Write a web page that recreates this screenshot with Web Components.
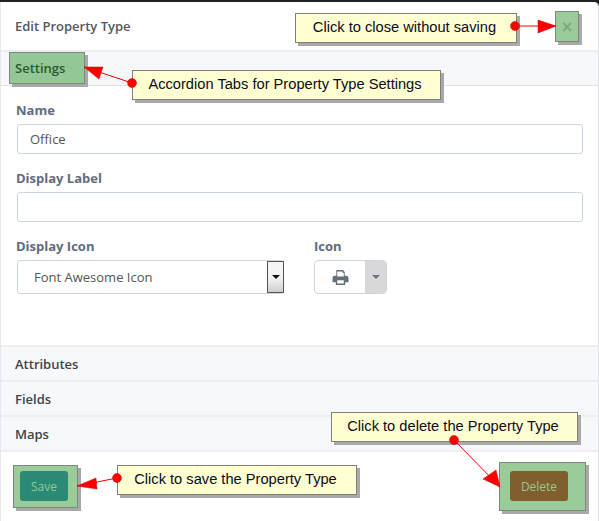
<!DOCTYPE html>
<html>
<head>
<meta charset="utf-8">
<title>Edit Property Type</title>
<style>
    html, body { margin: 0; padding: 0; background: #fff; }
    body { width: 599px; height: 521px; overflow: hidden; font-family: "Open Sans", sans-serif; }
</style>
</head>
<body>
<edit-dialog>
    <span slot="title">Edit Property Type</span>
    <mark-box slot="close" w="24" h="31"><span style="color:#7da87d;font:bold 15px 'DejaVu Sans',sans-serif">×</span></mark-box>

    <accordion-row open><mark-box w="76" h="32" flush><span style="font-weight:600;font-size:13px;color:#2a5a34;padding-left:5px">Settings</span></mark-box></accordion-row>
    <settings-form></settings-form>
    <accordion-row label="Attributes"></accordion-row>
    <accordion-row label="Fields"></accordion-row>
    <accordion-row label="Maps" last></accordion-row>

    <mark-box slot="save" w="65" h="43" inset="3"><dialog-button bg="#2b8a76">Save</dialog-button></mark-box>
    <mark-box slot="delete" w="87" h="49" inset="7"><dialog-button bg="#7f5f2e" wide>Delete</dialog-button></mark-box>
</edit-dialog>

<callout-note x="295" y="13" w="222">Click to close without saving</callout-note>
<callout-note x="132" y="70" w="309">Accordion Tabs for Property Type Settings</callout-note>
<callout-note x="117" y="465" w="240">Click to save the Property Type</callout-note>
<callout-note x="331" y="412" w="247">Click to delete the Property Type</callout-note>

<note-arrows></note-arrows>

<script>
class EditDialog extends HTMLElement {
    connectedCallback() {
        this.attachShadow({ mode: 'open' });
        this.shadowRoot.innerHTML = `
            <style>
                :host {
                    display: block;
                    width: 599px;
                    height: 521px;
                    box-sizing: border-box;
                    border-top: 2px solid #222;
                    background: #222;
                }
                .panel {
                    height: 519px;
                    box-sizing: border-box;
                    background: #fff;
                    border-left: 1px solid #e6e8ee;
                    border-right: 1px solid #dfe1e6;
                    border-radius: 0 5px 0 0;
                    display: flex;
                    flex-direction: column;
                }
                header {
                    height: 50px;
                    display: flex;
                    justify-content: space-between;
                    padding: 9px 19px 0 14px;
                    box-sizing: border-box;
                    border-bottom: 2px solid #eceef1;
                    flex: none;
                }
                .title {
                    font-size: 13px;
                    font-weight: 600;
                    color: #54575c;
                    line-height: 30px;
                }
                footer {
                    flex: 1;
                    display: flex;
                    justify-content: space-between;
                    padding: 13px 12px 0 12px;
                    align-items: flex-start;
                }
                ::slotted([slot="delete"]) { margin-top: -3px; }
            </style>
            <div class="panel">
                <header>
                    <div class="title"><slot name="title"></slot></div>
                    <slot name="close"></slot>
                </header>
                <slot></slot>
                <footer>
                    <slot name="save"></slot>
                    <slot name="delete"></slot>
                </footer>
            </div>
        `;
    }
}

class AccordionRow extends HTMLElement {
    connectedCallback() {
        const label = this.getAttribute('label') || '';
        this.attachShadow({ mode: 'open' });
        this.shadowRoot.innerHTML = `
            <style>
                :host {
                    display: block;
                    flex: none;
                    background: #f7f8fb;
                    border-top: 2px solid #eceef1;
                    height: 33px;
                    font-size: 13px;
                    font-weight: 600;
                    color: #3e444c;
                }
                :host([open]) {
                    border-top: 0;
                    height: 33px;
                    border-bottom: 1px solid #e0e2e6;
                    padding-left: 8px;
                }
                :host([last]) { border-bottom: 2px solid #eceef1; }
                .label { padding-left: 14px; line-height: 34px; }
            </style>
            ${label ? `<div class="label">${label}</div>` : '<slot></slot>'}
        `;
    }
}

class MarkBox extends HTMLElement {
    connectedCallback() {
        const w = this.getAttribute('w');
        const h = this.getAttribute('h');
        const inset = this.getAttribute('inset') || 0;
        this.attachShadow({ mode: 'open' });
        this.shadowRoot.innerHTML = `
            <style>
                :host {
                    display: flex;
                    align-items: center;
                    justify-content: center;
                    box-sizing: border-box;
                    width: ${w}px;
                    height: ${h}px;
                    padding-right: ${inset}px;
                    padding-bottom: ${inset ? 1 : 0}px;
                    background: #9bcb98;
                    border: 1px solid #808680;
                    box-shadow: 3px 3px 0 #a9a9a9;
                    flex: none;
                }
                :host([flush]) { justify-content: flex-start; background: #93c795; }
            </style>
            <slot></slot>
        `;
    }
}

class DialogButton extends HTMLElement {
    connectedCallback() {
        const bg = this.getAttribute('bg');
        this.attachShadow({ mode: 'open' });
        this.shadowRoot.innerHTML = `
            <style>
                :host {
                    display: flex;
                    align-items: center;
                    justify-content: center;
                    width: 48px;
                    height: 30px;
                    border-radius: 3px;
                    background: ${bg};
                    color: #93c795;
                    font-size: 12px;
                }
                :host([wide]) { width: 58px; }
            </style>
            <slot></slot>
        `;
    }
}

class SettingsForm extends HTMLElement {
    connectedCallback() {
        this.attachShadow({ mode: 'open' });
        this.shadowRoot.innerHTML = `
            <style>
                :host {
                    display: block;
                    flex: none;
                    height: 259px;
                    box-sizing: border-box;
                    padding: 15px 15px 0 15px;
                }
                label {
                    display: block;
                    font-size: 13px;
                    font-weight: 700;
                    color: #626c7c;
                    line-height: 18px;
                    margin: 0 0 5px -1px;
                }
                .field { margin-left: 1px; }
                .input {
                    box-sizing: border-box;
                    height: 30px;
                    border: 1px solid #ccd6e0;
                    border-radius: 3px;
                    font-size: 13px;
                    color: #555;
                    padding-left: 12px;
                    line-height: 28px;
                    margin-bottom: 15px;
                    background: #fff;
                }
                .row { display: flex; margin-top: 0; }
                .row .col-a { width: 297px; }
                .select {
                    box-sizing: border-box;
                    width: 267px;
                    height: 34px;
                    border: 1px solid #ccd6e0;
                    border-radius: 3px;
                    font-size: 13px;
                    color: #555;
                    padding-left: 16px;
                    line-height: 32px;
                    display: flex;
                    justify-content: space-between;
                    background: #fff;
                }
                .spin {
                    width: 17px;
                    height: 32px;
                    margin-right: -1px;
                    box-sizing: border-box;
                    border: 1px solid #555;
                    background: linear-gradient(#f4f4f4 50%, #cfcfcf);
                    display: flex;
                    align-items: center;
                    justify-content: center;
                }
                .spin i {
                    width: 0;
                    height: 0;
                    border: 4px solid transparent;
                    border-top: 4px solid #111;
                    border-bottom: 0;
                }
                .icon-btn {
                    box-sizing: border-box;
                    width: 73px;
                    height: 34px;
                    border: 1px solid #ccd6e0;
                    border-radius: 4px;
                    display: flex;
                    overflow: hidden;
                    background: #fff;
                }
                .icon-btn .face {
                    flex: 1;
                    display: flex;
                    align-items: center;
                    justify-content: center;
                }
                .icon-btn .caret {
                    width: 21px;
                    background: #d8d8d8;
                    display: flex;
                    align-items: center;
                    justify-content: center;
                }
                .caret i {
                    width: 0;
                    height: 0;
                    border: 4px solid transparent;
                    border-top: 4px solid #6f7680;
                    border-bottom: 0;
                }
            </style>
            <div class="field">
                <label>Name</label>
                <div class="input">Office</div>
            </div>
            <div class="field">
                <label>Display Label</label>
                <div class="input"></div>
            </div>
            <div class="row field" style="margin-top:15px">
                <div class="col-a">
                    <label>Display Icon</label>
                    <div class="select">Font Awesome Icon<span class="spin"><i></i></span></div>
                </div>
                <div>
                    <label style="margin-left:0">Icon</label>
                    <div class="icon-btn">
                        <span class="face">
                            <svg width="17" height="15" viewBox="0 0 17 16">
                                <path fill="#66707a" fill-rule="evenodd" d="M4 0h7l2 2v4h1.500A2.500 2.500 0 0 1 17 8.500V13h-3.500v3h-10v-3H0V8.500A2.500 2.500 0 0 1 2.500 6H4zM5 1.500V7h7V3h-1.500V1.500zM5 11v3.500h7V11z"/>
                            </svg>
                        </span>
                        <span class="caret"><i></i></span>
                    </div>
                </div>
            </div>
        `;
    }
}

class CalloutNote extends HTMLElement {
    connectedCallback() {
        const x = this.getAttribute('x');
        const y = this.getAttribute('y');
        const w = this.getAttribute('w');
        this.attachShadow({ mode: 'open' });
        this.shadowRoot.innerHTML = `
            <style>
                :host {
                    position: absolute;
                    left: ${x}px;
                    top: ${y}px;
                    width: ${w}px;
                    height: 30px;
                    box-sizing: border-box;
                    background: #ffffd2;
                    border: 1px solid #808080;
                    box-shadow: 3px 3px 0 #a9a9a9;
                    padding: 0 3px 2px 0;
                    display: flex;
                    align-items: center;
                    justify-content: center;
                    font: 14.67px "Liberation Sans", Arial, sans-serif;
                    color: #0c0c20;
                    white-space: nowrap;
                }
            </style>
            <slot></slot>
        `;
    }
}

class NoteArrows extends HTMLElement {
    connectedCallback() {
        const arrows = [
            { dot: [515, 26], tip: [556, 26], a: [538, 20], b: [538, 33] },
            { dot: [132, 83], tip: [84, 67], a: [103, 67], b: [99, 79] },
            { dot: [117, 478], tip: [77, 486], a: [96, 478], b: [97, 489] },
            { dot: [454, 440], tip: [500, 487], a: [483, 479], b: [496, 470] }
        ];
        const drawn = arrows.map(({ dot, tip, a, b }) => `
            <line x1="${dot[0]}" y1="${dot[1]}" x2="${tip[0]}" y2="${tip[1]}" stroke="#f00" stroke-width="1"/>
            <polygon points="${tip} ${a} ${b}" fill="#f00" stroke="#c00" stroke-width=".5"/>
            <circle cx="${dot[0]}" cy="${dot[1]}" r="4.500" fill="#f00" stroke="#c00" stroke-width=".5"/>
        `).join('');
        this.attachShadow({ mode: 'open' });
        this.shadowRoot.innerHTML = `
            <style>
                :host { position: absolute; left: 0; top: 0; pointer-events: none; }
                svg { display: block; }
            </style>
            <svg width="599" height="521">${drawn}</svg>
        `;
    }
}

customElements.define('edit-dialog', EditDialog);
customElements.define('accordion-row', AccordionRow);
customElements.define('mark-box', MarkBox);
customElements.define('dialog-button', DialogButton);
customElements.define('settings-form', SettingsForm);
customElements.define('callout-note', CalloutNote);
customElements.define('note-arrows', NoteArrows);
</script>
</body>
</html>
